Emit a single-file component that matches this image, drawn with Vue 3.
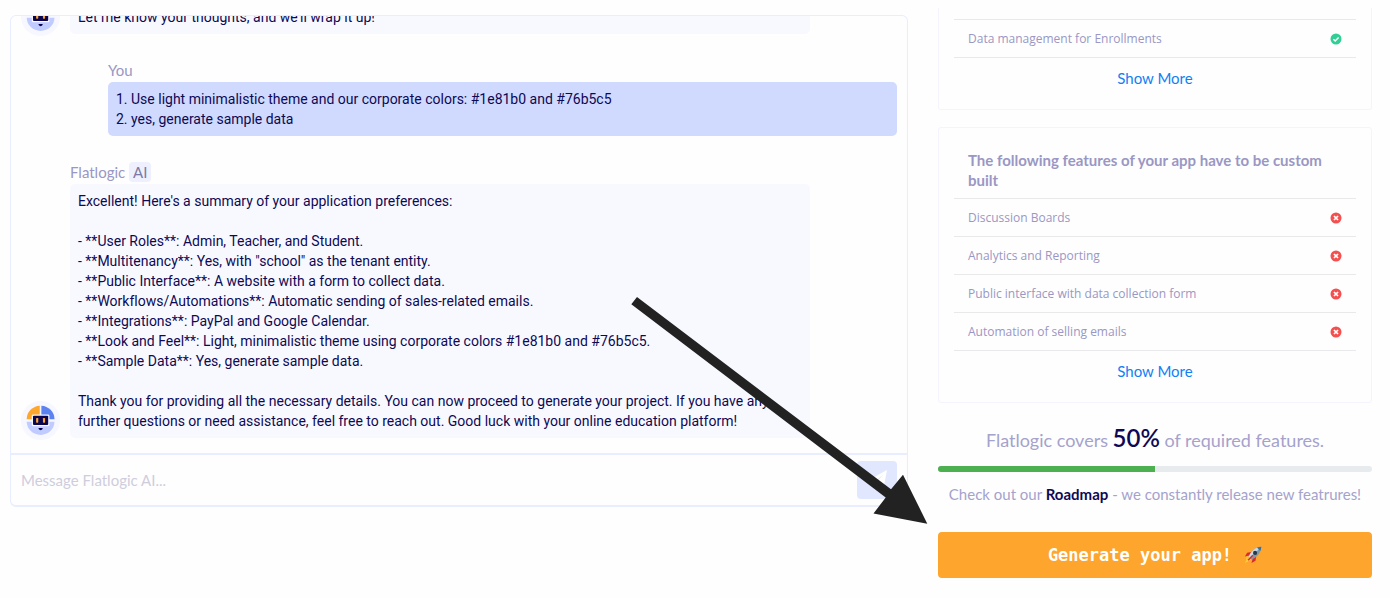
<script setup>
const preferences = `Excellent! Here's a summary of your application preferences:

- **User Roles**: Admin, Teacher, and Student.
- **Multitenancy**: Yes, with "school" as the tenant entity.
- **Public Interface**: A website with a form to collect data.
- **Workflows/Automations**: Automatic sending of sales-related emails.
- **Integrations**: PayPal and Google Calendar.
- **Look and Feel**: Light, minimalistic theme using corporate colors #1e81b0 and #76b5c5.
- **Sample Data**: Yes, generate sample data.

Thank you for providing all the necessary details. You can now proceed to generate your project. If you have any
further questions or need assistance, feel free to reach out. Good luck with your online education platform!`

const answer = `1. Use light minimalistic theme and our corporate colors: #1e81b0 and #76b5c5
2. yes, generate sample data`

const customFeatures = [
  'Discussion Boards',
  'Analytics and Reporting',
  'Public interface with data collection form',
  'Automation of selling emails',
]

const covered = 50
</script>

<template>
  <div class="page">
    <svg class="defs" aria-hidden="true">
      <symbol id="bot" viewBox="0 0 40 40">
        <circle cx="20" cy="20" r="20" fill="#f6f7ff" />
        <path d="M5.800 18.600A14.200 14.200 0 0 1 19.200 4.800v13.800z" fill="#ffa62b" />
        <path d="M20.900 4.800A14.200 14.200 0 0 1 34.400 18.600H20.900z" fill="#5b82f0" />
        <path d="M5.900 21.400h28.400a14.200 13.400 0 0 1-28.400 0z" fill="#c0cbff" />
        <rect x="11" y="13.800" width="18.200" height="12.200" rx="1.500" fill="#f6f7ff" />
        <rect x="12.300" y="15" width="15.600" height="9.600" rx="1" fill="#0b0650" />
        <rect x="15.500" y="17.400" width="2.200" height="4.800" rx=".6" fill="#ffa62b" />
        <rect x="22.500" y="17.400" width="2.200" height="4.800" rx=".6" fill="#ffa62b" />
        <path d="M17.800 27.600h4.600l-.7 1.600-1.600.9-1.600-.9z" fill="#0b0650" />
      </symbol>
    </svg>

    <main class="chat">
      <div class="messages">
        <div class="message bot">
          <svg class="avatar"><use href="#bot" /></svg>
          <div class="body">
            <p class="bubble">Let me know your thoughts, and we'll wrap it up!</p>
          </div>
        </div>
        <div class="message user">
          <div class="body">
            <span class="author">You</span>
            <p class="bubble">{{ answer }}</p>
          </div>
        </div>
        <div class="message bot">
          <svg class="avatar"><use href="#bot" /></svg>
          <div class="body">
            <span class="author">Flatlogic <span class="tag">AI</span></span>
            <p class="bubble">{{ preferences }}</p>
          </div>
        </div>
      </div>
      <form class="composer" @submit.prevent>
        <input type="text" aria-label="Message Flatlogic AI" placeholder="Message Flatlogic AI..." />
        <button class="send" type="submit" aria-label="Send">
          <svg viewBox="0 0 24 24" width="24" height="24"><path d="M22 2 18.4 21l-6.2-2.8-3 3.6v-5.3L18.6 6.6 7 15.4 2 13z" fill="#fff" /></svg>
        </button>
      </form>
    </main>

    <aside class="side">
      <section class="card ready">
        <ul class="features">
          <li>
            <span>Data management for Enrollments</span>
            <svg viewBox="0 0 12 12" width="12" height="12"><circle cx="6" cy="6" r="5.5" fill="#2fcf96" /><path d="m3.4 6.2 1.8 1.8 3.4-3.5" fill="none" stroke="#fff" stroke-width="1.5" /></svg>
          </li>
        </ul>
        <a class="more" href="#">Show More</a>
      </section>

      <section class="card">
        <h2>The following features of your app have to be custom built</h2>
        <ul class="features">
          <li v-for="name in customFeatures" :key="name">
            <span>{{ name }}</span>
            <svg viewBox="0 0 12 12" width="12" height="12"><circle cx="6" cy="6" r="5.5" fill="#f4504f" /><path d="m4 4 4 4m0-4L4 8" fill="none" stroke="#fff" stroke-width="1.7" /></svg>
          </li>
        </ul>
        <a class="more" href="#">Show More</a>
      </section>

      <p class="coverage">Flatlogic covers <strong>{{ covered }}%</strong> of required features.</p>
      <div class="bar" role="progressbar" :aria-valuenow="covered"><div class="fill" :style="{ width: covered + '%' }"></div></div>
      <p class="roadmap">Check out our <a href="#">Roadmap</a> - we constantly release new featrures!</p>
      <button class="generate" type="button">
        <span>Generate your app!</span>
        <svg viewBox="0 0 20 20" width="18" height="18" aria-hidden="true">
          <path d="M5.2 12.2 1 19l7-3.800z" fill="#ffd93b" />
          <path d="M2.200 12.500 4.800 11l1.400 2-4 4.500z" fill="#f7c52c" />
          <path d="m8 6.600-4.500.8L1 11.800l4.600-1.200zM13.600 12l-.8 4.400L8.300 19l1.300-4.700z" fill="#d92b2b" />
          <path d="M19.200.8c-5.200.2-9 2.800-11.600 6.700l-2.600 4.600 3 3 4.700-2.600C16.500 9.800 19 6 19.200.8z" fill="#7d98ad" />
          <path d="M19.200.8C14 1 10.200 3.600 7.600 7.500L5 12.100l1.300 1.300z" fill="#c8dbe8" />
          <path d="M19.200.8c-1.800 0-3.400.4-4.800 1l3.700 3.700c.7-1.400 1-3 1.100-4.700z" fill="#3e7098" />
          <circle cx="12.300" cy="7.700" r="2.300" fill="#27374a" />
          <path d="m9.800 10.300-5.200 5.600" stroke="#d92b2b" stroke-width="1.600" />
        </svg>
      </button>
    </aside>

    <svg class="pointer" viewBox="0 0 298 228" width="298" height="228" aria-hidden="true">
      <path d="M1.300 7.300 7 0l254 192.300 12-14.600 24.300 49-53.800-10.200 12.200-16z" fill="#222" />
    </svg>
  </div>
</template>

<style>
body {
  background: #fefefe;
}
</style>

<style scoped>
.page {
  position: relative;
  display: grid;
  grid-template-columns: 898fr 434fr;
  align-items: start;
  gap: 30px;
  padding: 8px 18px 20px 10px;
  color: #0e0954;
  font-family: Lato, "Liberation Sans", sans-serif;
  font-size: 15px;
  font-variant-ligatures: none;
  line-height: 20px;
}
.page * {
  box-sizing: border-box;
}
.defs {
  position: absolute;
  width: 0;
  height: 0;
}
p,
h2,
ul {
  margin: 0;
  padding: 0;
}
.chat {
  margin-top: 7px;
  border: 2px solid #e8edff;
  border-width: 1px 1px 2px 1px;
  border-radius: 6px;
}
.messages {
  display: flex;
  flex-direction: column;
  justify-content: flex-end;
  gap: 26px;
  height: 437px;
  padding: 0 10px 15px 10px;
  overflow: hidden;
}
.message {
  display: flex;
  flex-shrink: 0;
  align-items: flex-end;
  gap: 10px;
}
.avatar {
  flex: none;
  width: 39px;
  height: 39px;
  margin-bottom: -2px;
}
.bot .bubble {
  background: #f8f9ff;
}
.bot .body {
  margin-right: 87px;
}
.body {
  flex: 1;
}
.user {
  padding-left: 87px;
}
.user .bubble {
  background: #d0daff;
}
.author {
  display: block;
  padding-bottom: 2px;
  color: #9a97c4;
}
.tag {
  display: inline-block;
  padding: 0 4px;
  border-radius: 4px;
  background: #eef0ff;
  color: #7b79a5;
}
.bubble {
  padding: 7px 8px;
  border-radius: 5px;
  font-family: Roboto, "Liberation Sans", sans-serif;
  font-size: 14px;
  white-space: pre-wrap;
}
.composer {
  display: flex;
  align-items: center;
  gap: 8px;
  padding: 6px 10px;
  border-top: 2px solid #e8edff;
}
.composer input {
  flex: 1;
  min-width: 0;
  padding: 0;
  border: 0;
  outline: 0;
  background: none;
  font: inherit;
}
.composer input::placeholder {
  color: #cfcddd;
}
.send {
  display: grid;
  place-items: center;
  width: 40px;
  height: 38px;
  padding: 0;
  border: 0;
  border-radius: 4px;
  background: #e0e7ff;
}
.card {
  margin-bottom: 17px;
  padding: 22px 15px 21px;
  border: 1px solid #f4f4ff;
  border-radius: 3px;
}
.ready {
  padding-top: 11px;
  border-top: 0;
  border-radius: 0 0 3px 3px;
}
h2 {
  padding: 0 14px 8px;
  color: #9a97c4;
  font-size: 15px;
  font-weight: 700;
  line-height: 20px;
}
.features {
  border-bottom: 1px solid #e9e9eb;
  list-style: none;
}
.features li {
  display: flex;
  align-items: center;
  justify-content: space-between;
  min-height: 38px;
  padding: 8px 14px;
  border-top: 1px solid #e9e9eb;
  color: #9a97c4;
  font-family: "Open Sans", "Liberation Sans", sans-serif;
  font-size: 12px;
}
.more {
  display: block;
  margin-top: 10px;
  color: #1080f5;
  text-align: center;
  text-decoration: none;
}
.coverage {
  color: #a5a2cc;
  font-size: 18px;
  line-height: 36px;
  text-align: center;
}
.coverage strong {
  color: #0e0954;
  font-size: 24px;
  font-weight: 600;
}
.bar {
  height: 6px;
  margin-top: 8px;
  overflow: hidden;
  border-radius: 3px;
  background: #e8ebee;
}
.fill {
  height: 100%;
  background: #4caf50;
}
.roadmap {
  margin: 12px 0 28px;
  color: #a5a2cc;
  text-align: center;
}
.roadmap a {
  color: #0e0954;
  font-weight: 700;
  text-decoration: none;
}
.generate {
  display: flex;
  align-items: center;
  justify-content: center;
  gap: 12px;
  width: 100%;
  height: 46px;
  border: 0;
  border-radius: 4px;
  background: #fda52c;
  color: #fff;
  font: 700 17px "DejaVu Sans Mono", monospace;
}
.pointer {
  position: absolute;
  top: 297px;
  left: 630px;
  pointer-events: none;
}
</style>
